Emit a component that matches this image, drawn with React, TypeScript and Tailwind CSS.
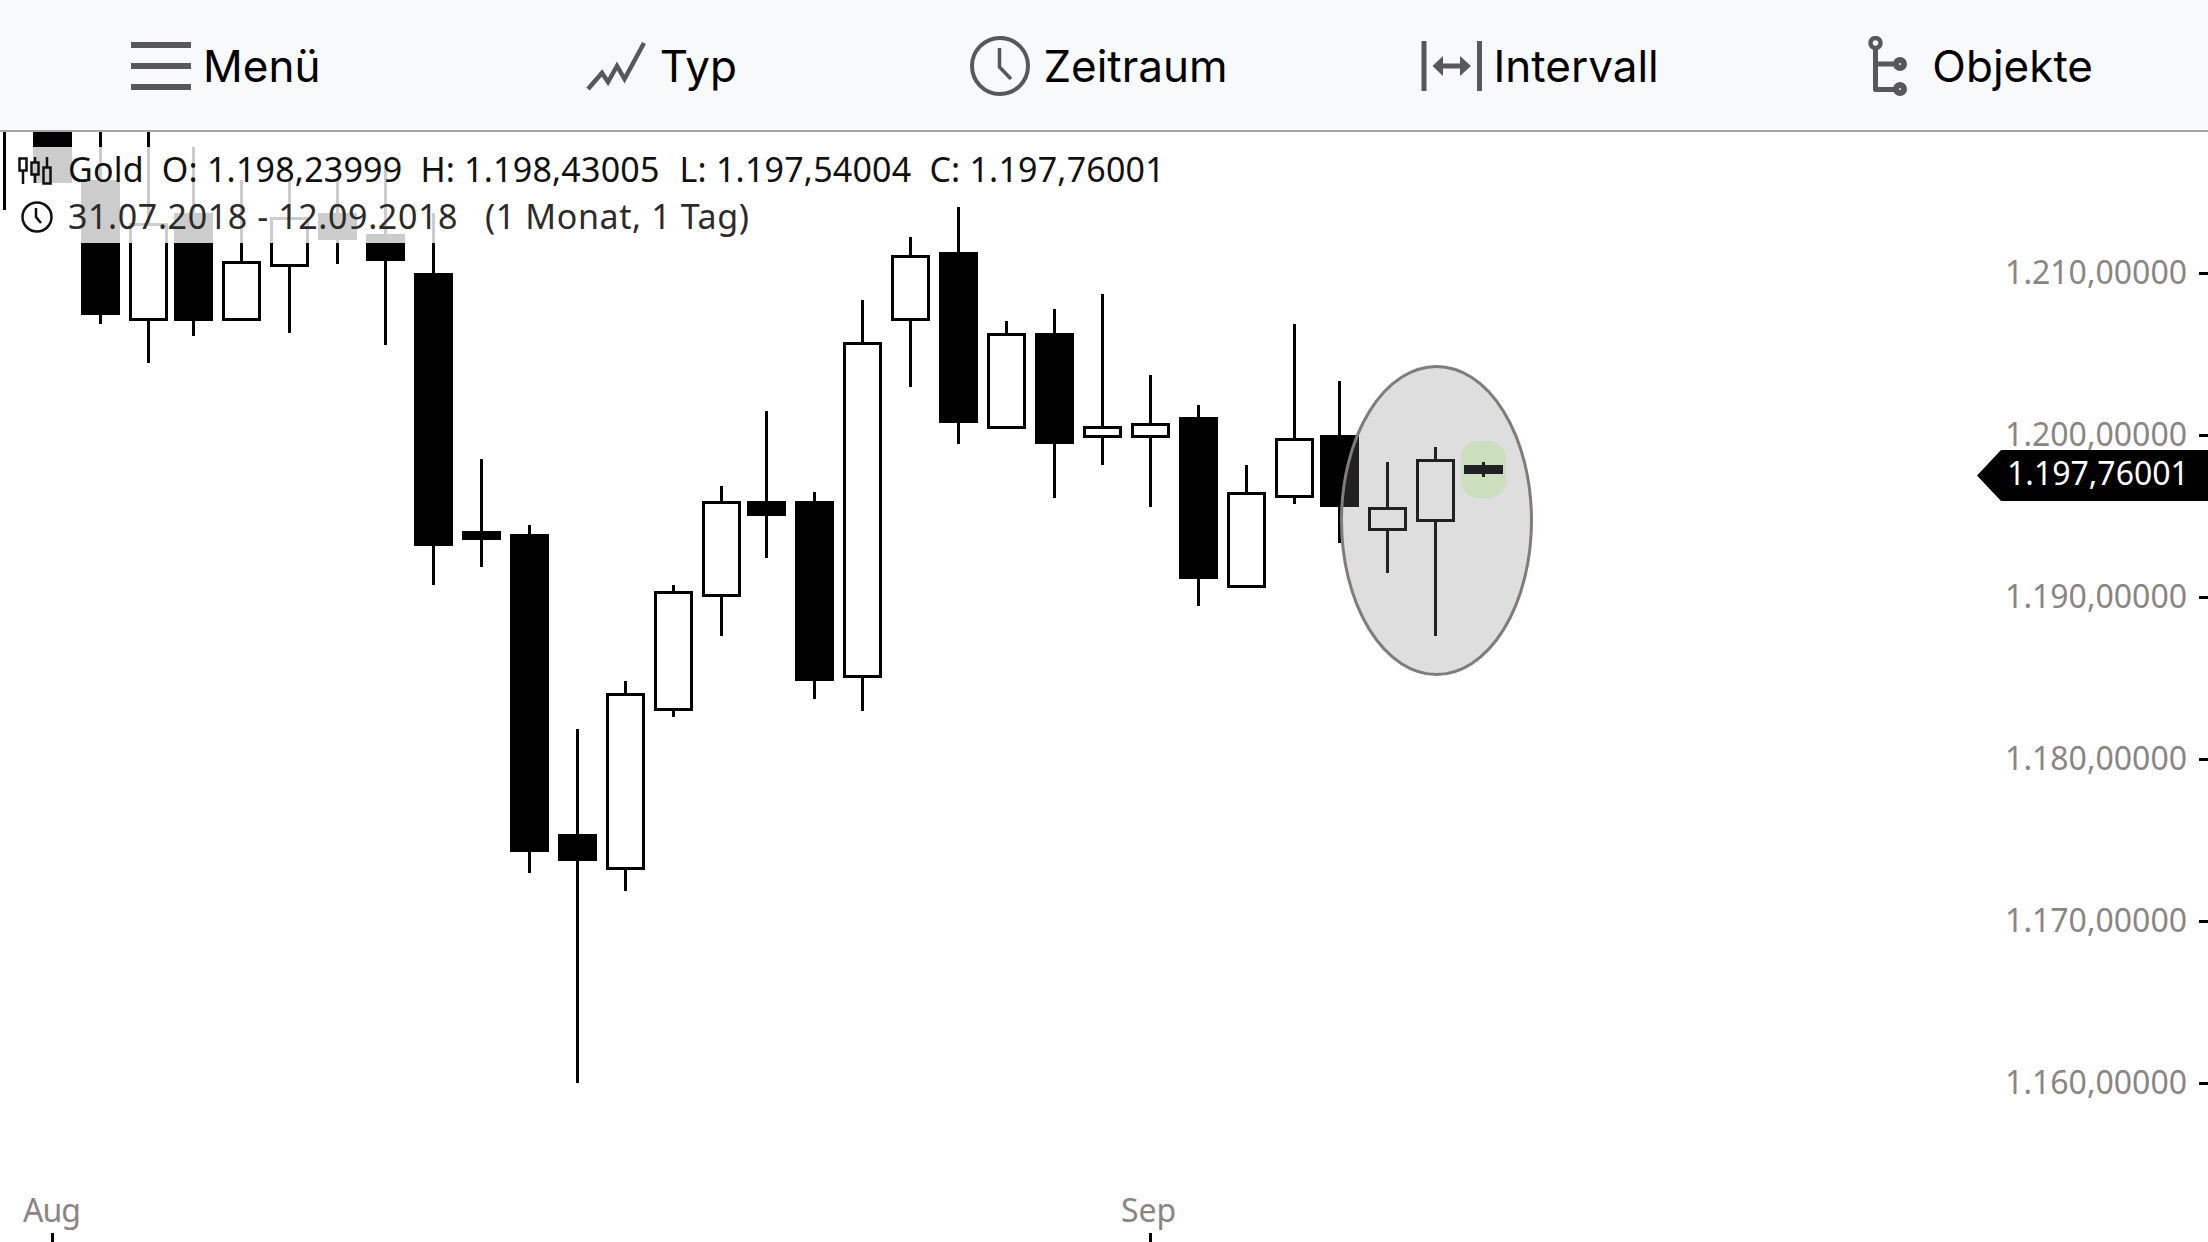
import type { ReactNode } from "react";

// center x, wick top, wick bottom, body top, body bottom, filled
type Candle = [number, number, number, number, number, boolean];

const candles: Candle[] = [
  [52.5, 100, 183, 100, 183, true],
  [100.5, 100, 324, 180, 315, true],
  [148.5, 100, 363, 223, 321, false],
  [193.5, 147, 336, 213, 321, true],
  [241.5, 180, 321, 261, 321, false],
  [289.5, 180, 333, 217, 267, false],
  [337.5, 180, 264, 213, 240, true],
  [385.5, 168, 345, 234, 261, true],
  [433.5, 213, 585, 273, 546, true],
  [481.5, 459, 567, 531, 540, true],
  [529.5, 525, 873, 534, 852, true],
  [577.5, 729, 1083, 834, 861, true],
  [625.5, 681, 891, 693, 870, false],
  [673.5, 585, 717, 591, 711, false],
  [721.5, 486, 636, 501, 597, false],
  [766.5, 411, 558, 501, 516, true],
  [814.5, 492, 699, 501, 681, true],
  [862.5, 300, 711, 342, 678, false],
  [910.5, 237, 387, 255, 321, false],
  [958.5, 207, 444, 252, 423, true],
  [1006.5, 321, 429, 333, 429, false],
  [1054.5, 309, 498, 333, 444, true],
  [1102.5, 294, 465, 426, 438, false],
  [1150.5, 375, 507, 423, 438, false],
  [1198.5, 405, 606, 417, 579, true],
  [1246.5, 465, 588, 492, 588, false],
  [1294.5, 324, 504, 438, 498, false],
  [1339.5, 381, 543, 435, 507, true],
  [1387.5, 462, 573, 507, 531, false],
  [1435.5, 447, 636, 459, 522, false],
];

const yLabels = [
  "1.210,00000",
  "1.200,00000",
  "1.190,00000",
  "1.180,00000",
  "1.170,00000",
  "1.160,00000",
];

function CandleMark({ c }: { c: Candle }) {
  const [x, top, bottom, bodyTop, bodyBottom, filled] = c;
  return (
    <g>
      <rect x={x - 1.5} y={top} width={3} height={bottom - top} fill="#000" />
      {filled ? (
        <rect x={x - 19.5} y={bodyTop} width={39} height={bodyBottom - bodyTop} fill="#000" />
      ) : (
        <rect
          x={x - 18}
          y={bodyTop + 1.5}
          width={36}
          height={bodyBottom - bodyTop - 3}
          fill="#fff"
          stroke="#000"
          strokeWidth={3}
        />
      )}
    </g>
  );
}

function NavItem({
  label,
  icon,
  className,
}: {
  label: string;
  icon: ReactNode;
  className: string;
}) {
  return (
    <div className={`flex items-center justify-center pt-[2px] ${className}`}>
      {icon}
      <span className="text-[44px] leading-none text-black">{label}</span>
    </div>
  );
}

function MenuIcon() {
  return (
    <svg width="60" height="60" viewBox="0 0 60 60" fill="#58585a">
      <rect y="6" width="60" height="6" />
      <rect y="27" width="60" height="6" />
      <rect y="48" width="60" height="6" />
    </svg>
  );
}

function TypeIcon() {
  return (
    <svg width="60" height="60" viewBox="0 0 60 60" fill="none" stroke="#58585a" strokeWidth="4.5">
      <path d="M2 53 16 37l6 9 9-16 7.5 13L58 7" />
    </svg>
  );
}

function ClockIcon() {
  return (
    <svg width="60" height="60" viewBox="0 0 60 60" fill="none" stroke="#58585a">
      <circle cx="30" cy="30" r="28" strokeWidth="4" />
      <path d="M29.5 12v19L41 43" strokeWidth="3.5" />
    </svg>
  );
}

function IntervalIcon() {
  return (
    <svg width="61" height="60" viewBox="0 0 61 60" fill="#58585a">
      <rect x="0.5" y="5" width="5" height="50" />
      <rect x="56" y="5" width="5" height="50" />
      <path d="M11.5 30 22 20v7.500h17V20l11 10-11 10v-7.500H22V40z" />
    </svg>
  );
}

function ObjectsIcon() {
  return (
    <svg width="50" height="60" viewBox="0 0 50 60" fill="none" stroke="#58585a">
      <path d="M7.5 13v40.500H28M7.500 28H28" strokeWidth="5" strokeLinejoin="round" />
      <circle cx="7.500" cy="7" r="5" strokeWidth="4.500" />
      <circle cx="32" cy="28" r="4" strokeWidth="6" />
      <circle cx="32" cy="53" r="4" strokeWidth="6" />
    </svg>
  );
}

function SmallCandlesIcon() {
  return (
    <svg width="34" height="30" viewBox="0 0 34 30" fill="none" stroke="#111" strokeWidth="2.500">
      <path d="M5 15v13M17 1v5M17 19v8M29 1v10" />
      <rect x="1.500" y="2.500" width="7" height="12" />
      <rect x="13.500" y="6.500" width="7" height="12" />
      <rect x="25.500" y="11.500" width="7" height="16" />
    </svg>
  );
}

function SmallClockIcon() {
  return (
    <svg width="34" height="34" viewBox="0 0 34 34" fill="none" stroke="#111">
      <circle cx="17" cy="17" r="14.500" strokeWidth="2.500" />
      <path d="M16 8v9l5 6" strokeWidth="2.500" />
    </svg>
  );
}

export default function App() {
  return (
    <div className="flex h-[1242px] w-[2208px] flex-col overflow-hidden bg-white font-['Noto_Sans',sans-serif]">
      <nav className="grid h-[132px] shrink-0 grid-cols-5 border-b-2 border-[#a3a6aa] bg-[#f8f9fb] font-['Inter',sans-serif]">
        <NavItem label="Menü" icon={<MenuIcon />} className="gap-[12px] pl-[10px]" />
        <NavItem label="Typ" icon={<TypeIcon />} className="gap-[14px] pr-[2px]" />
        <NavItem label="Zeitraum" icon={<ClockIcon />} className="gap-[13px] pr-[10px]" />
        <NavItem label="Intervall" icon={<IntervalIcon />} className="gap-[11px] pr-[11px]" />
        <NavItem label="Objekte" icon={<ObjectsIcon />} className="gap-[14px] pr-[13px]" />
      </nav>

      <main className="relative flex-1">
        <svg
          className="absolute inset-0"
          width="2208"
          height="1110"
          viewBox="0 132 2208 1110"
        >
          <rect x={3} y={132} width={3} height={78} fill="#000" />
          {candles.map((c) => (
            <CandleMark key={c[0]} c={c} />
          ))}
          <ellipse
            cx="1436.5"
            cy="520.5"
            rx="95"
            ry="154"
            fill="#7f7f7f"
            fillOpacity="0.26"
            stroke="#807c7a"
            strokeWidth="3"
          />
          <rect x="1461" y="441" width="45" height="57" rx="17" fill="#cbdfbf" />
          <rect x="1482" y="462" width="3" height="15" fill="#212121" />
          <rect x="1464" y="465" width="39" height="9" fill="#212121" />
        </svg>

        {/* legend */}
        <div className="absolute left-[12px] top-[15px] flex flex-col items-start text-[34px] leading-none">
          <div className="flex h-[48px] w-[1170px] items-center bg-white/80 tracking-[0.2px] text-[#111]">
            <span className="ml-[6px] mr-[16px] flex w-[34px] justify-center">
              <SmallCandlesIcon />
            </span>
            <span className="pb-[5px]">Gold</span>
            <span className="ml-[18px] pb-[5px]">O: 1.198,23999</span>
            <span className="ml-[18px] pb-[5px]">H: 1.198,43005</span>
            <span className="ml-[20px] pb-[5px]">L: 1.197,54004</span>
            <span className="ml-[18px] pb-[5px]">C: 1.197,76001</span>
          </div>
          <div className="flex h-[48px] w-[750px] items-center bg-white/80 tracking-[0.6px] text-[#2b2b2b]">
            <span className="ml-[8px] mr-[14px] flex w-[34px] justify-center pb-[4px]">
              <SmallClockIcon />
            </span>
            <span className="pb-[7px]">31.07.2018 - 12.09.2018</span>
            <span className="ml-[27px] pb-[7px]">(1 Monat, 1 Tag)</span>
          </div>
        </div>

        {/* y axis */}
        <div className="absolute right-0 top-[60px] flex flex-col">
          {yLabels.map((label) => (
            <div key={label} className="flex h-[162px] items-center justify-end gap-[12px]">
              <span className="pb-[3px] text-[32px] leading-none text-[#8a8583]">{label}</span>
              <span className="h-[3px] w-[9px] bg-black" />
            </div>
          ))}
        </div>

        {/* last price tag */}
        <div className="absolute left-[1977px] top-[318px] flex h-[51px] w-[231px] items-center bg-black pb-[5px] pl-[30px] text-[32px] leading-none text-white [clip-path:polygon(24px_0,100%_0,100%_100%,24px_100%,0_50%)]">
          1.197,76001
        </div>

        {/* x axis */}
        <div className="absolute bottom-0 left-0 flex">
          <div className="flex w-[1099px] flex-col items-start pl-[23px]">
            <span className="text-[32px] leading-[48px] tracking-[-1px] text-[#8a8583]">Aug</span>
            <span className="ml-[28px] -mt-px h-[9px] w-[3px] bg-black" />
          </div>
          <div className="flex flex-col items-start">
            <span className="ml-[22px] text-[32px] leading-[48px] text-[#8a8583]">Sep</span>
            <span className="ml-[50px] -mt-px h-[9px] w-[3px] bg-black" />
          </div>
        </div>
      </main>
    </div>
  );
}
